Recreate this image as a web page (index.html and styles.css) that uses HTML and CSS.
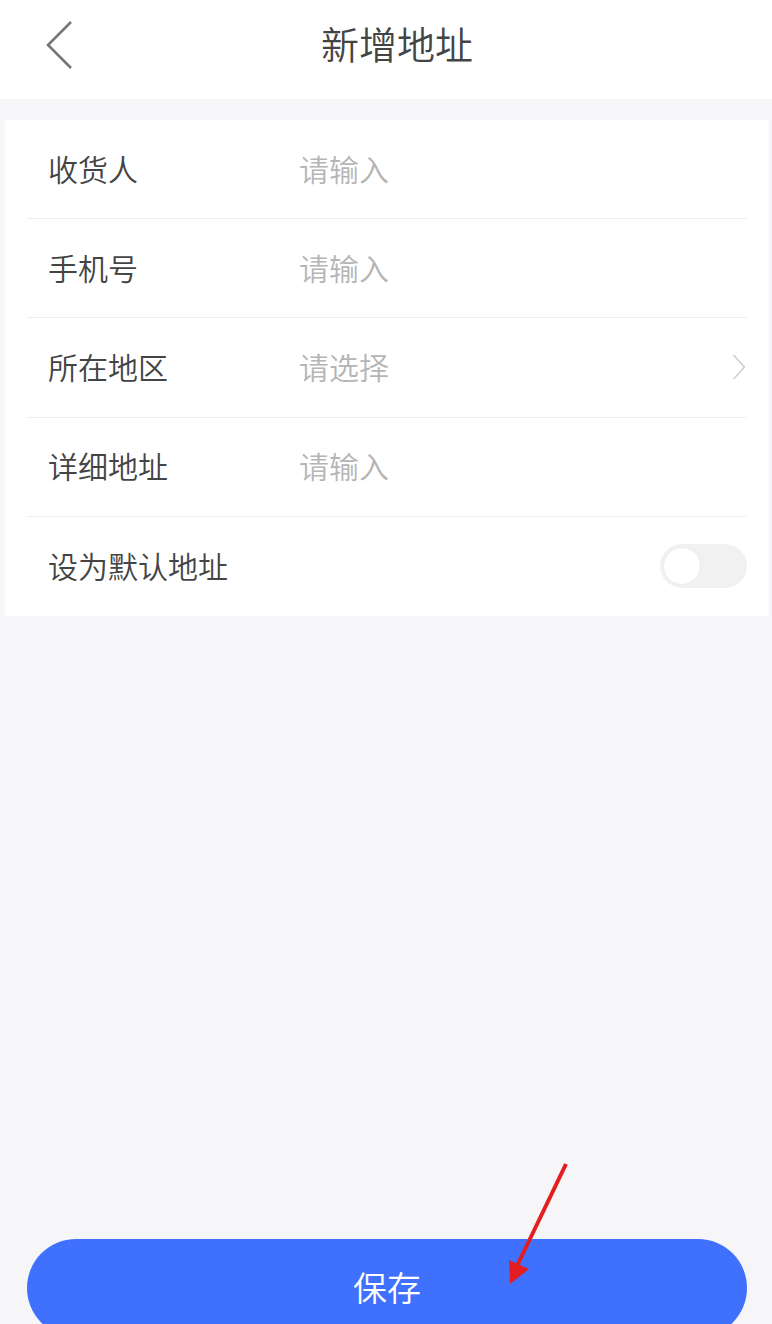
FILE: index.html
```html
<!DOCTYPE html>
<html lang="zh-CN">
<head>
    <meta charset="utf-8">
    <title>新增地址</title>
    <link rel="stylesheet" href="styles.css">
</head>
<body>
    <div class="page">
        <header class="topbar">
            <a class="back" href="#">
                <svg width="30" height="50" viewBox="0 0 30 50">
                    <polyline points="26,2 3,25 26,48" fill="none" stroke="#777" stroke-width="2.6"/>
                </svg>
            </a>
            <h1 class="title">新增地址</h1>
            <span></span>
        </header>

        <div class="form-card">
            <div class="row">
                <label class="row-label">收货人</label>
                <input class="row-input" type="text" placeholder="请输入">
            </div>
            <div class="row">
                <label class="row-label">手机号</label>
                <input class="row-input" type="text" placeholder="请输入">
            </div>
            <div class="row">
                <label class="row-label">所在地区</label>
                <span class="row-input pick">请选择</span>
                <svg class="chev" width="14" height="26" viewBox="0 0 14 26">
                    <polyline points="1.5,1 12.5,13 1.5,25" fill="none" stroke="#cfcfcf" stroke-width="1.6"/>
                </svg>
            </div>
            <div class="row">
                <label class="row-label">详细地址</label>
                <input class="row-input" type="text" placeholder="请输入">
            </div>
            <div class="row last">
                <label class="row-label">设为默认地址</label>
                <span class="switch"><span class="knob"></span></span>
            </div>
        </div>

        <div class="footer">
            <button class="save-btn" type="button">保存</button>
        </div>
    </div>

    <svg class="mark" width="772" height="1324" viewBox="0 0 772 1324">
        <line x1="566" y1="1164" x2="516" y2="1268" stroke="#e41e20" stroke-width="4"/>
        <polygon points="510,1284 509,1260 529,1269" fill="#e41e20"/>
    </svg>
</body>
</html>
```

FILE: styles.css
```css
*{
    margin: 0;
    padding: 0;
    box-sizing: border-box;
}
body{
    background-color: #f6f6f8;
    font-family: "Noto Sans CJK SC", "Noto Sans", sans-serif;
    font-weight: 350;
    height: 1324px;
    overflow: hidden;
    position: relative;
}

.page{
    height: 1337px;
    display: flex;
    flex-direction: column;
}

.topbar{
    height: 99px;
    background-color: #fff;
    display: grid;
    grid-template-columns: 1fr auto 1fr;
    align-items: center;
}
.back{
    display: flex;
    padding-left: 45px;
    margin-top: -10px;
}
.title{
    font-size: 38px;
    font-weight: 350;
    color: #444;
    margin: -14px 0 0 22px;
}

.form-card{
    background-color: #fff;
    margin: 21px 3px 0 5px;
    padding: 0 22px;
}
.row{
    height: 99.2px;
    display: flex;
    align-items: center;
    padding: 0 0 3px 21px;
    border-bottom: 1px solid #eeeeee;
}
.row.last{
    border-bottom: none;
}
.row-label{
    width: 251px;
    font-size: 30px;
    color: #444;
}
.row-input{
    flex: 1;
    border: none;
    outline: none;
    background: transparent;
    font-family: inherit;
    font-weight: 350;
    font-size: 30px;
    color: #333;
}
.row-input::placeholder{
    color: #b5b5b5;
}
.pick{
    color: #b5b5b5;
}
.chev{
    margin: 3px 1px 0 0;
}

.switch{
    margin: 3px 0 0 auto;
    width: 87px;
    height: 44px;
    border-radius: 22px;
    background-color: #f1f1f1;
    padding: 3px;
    display: flex;
}
.knob{
    width: 38px;
    height: 38px;
    border-radius: 50%;
    background-color: #fff;
    border: 1px solid #ececec;
}

.footer{
    margin-top: auto;
    padding: 0 25px 0 27px;
}
.save-btn{
    width: 100%;
    height: 98px;
    border: none;
    border-radius: 49px;
    background-color: #3f71fe;
    color: #fff;
    font-family: inherit;
    font-weight: 350;
    font-size: 34px;
    padding-bottom: 4px;
}

.mark{
    position: absolute;
    left: 0;
    top: 0;
    pointer-events: none;
}
```
